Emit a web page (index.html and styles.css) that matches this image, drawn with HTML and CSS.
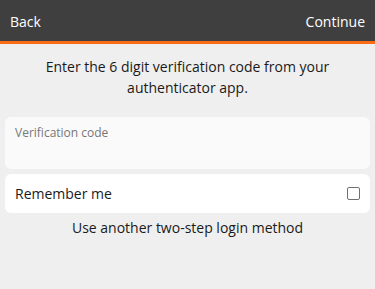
FILE: index.html
```html
<!DOCTYPE html>
<html>
<head>
<meta charset="utf-8">
<link rel="stylesheet" href="styles.css">
</head>
<body>
<header class="bar">
  <span class="bar-btn">Back</span>
  <span class="bar-btn">Continue</span>
</header>
<main class="content">
  <p class="intro">Enter the 6 digit verification code from your authenticator app.</p>
  <div class="field">
    <label class="field-label">Verification code</label>
  </div>
  <div class="row">
    <span class="row-label">Remember me</span>
    <span class="checkbox"></span>
  </div>
  <p class="alt">Use another two-step login method</p>
</main>
</body>
</html>
```
FILE: styles.css
```css
html, body {
  margin: 0;
  padding: 0;
  background: #efefef;
  font-family: "Open Sans", "Noto Sans", sans-serif;
  color: #1a1a1a;
}
.bar {
  height: 41px;
  background: #3f3f3f;
  border-bottom: 3px solid #f96b14;
  display: flex;
  justify-content: space-between;
  align-items: center;
  padding: 0 10px;
}
.bar-btn {
  color: #ffffff;
  font-size: 14px;
  margin-top: 1px;
}
.content {
  padding: 0 5px;
  display: flex;
  flex-direction: column;
}
.intro {
  margin: 12px 20px 0;
  text-align: center;
  font-size: 14px;
  line-height: 21px;
}
.field {
  margin-top: 19px;
  height: 52px;
  background: #fafafa;
  border-radius: 6px;
  padding: 3px 10px 0;
  box-sizing: border-box;
}
.field-label {
  font-size: 12px;
  color: #777777;
}
.row {
  margin-top: 5px;
  height: 39px;
  background: #ffffff;
  border-radius: 6px;
  display: flex;
  align-items: center;
  justify-content: space-between;
  padding: 0 10px;
}
.row-label {
  font-size: 14px;
}
.checkbox {
  width: 11px;
  height: 11px;
  border: 1px solid #707070;
  border-radius: 2px;
}
.alt {
  margin: 5px 0 0;
  text-align: center;
  font-size: 14px;
  line-height: 20px;
}
```
